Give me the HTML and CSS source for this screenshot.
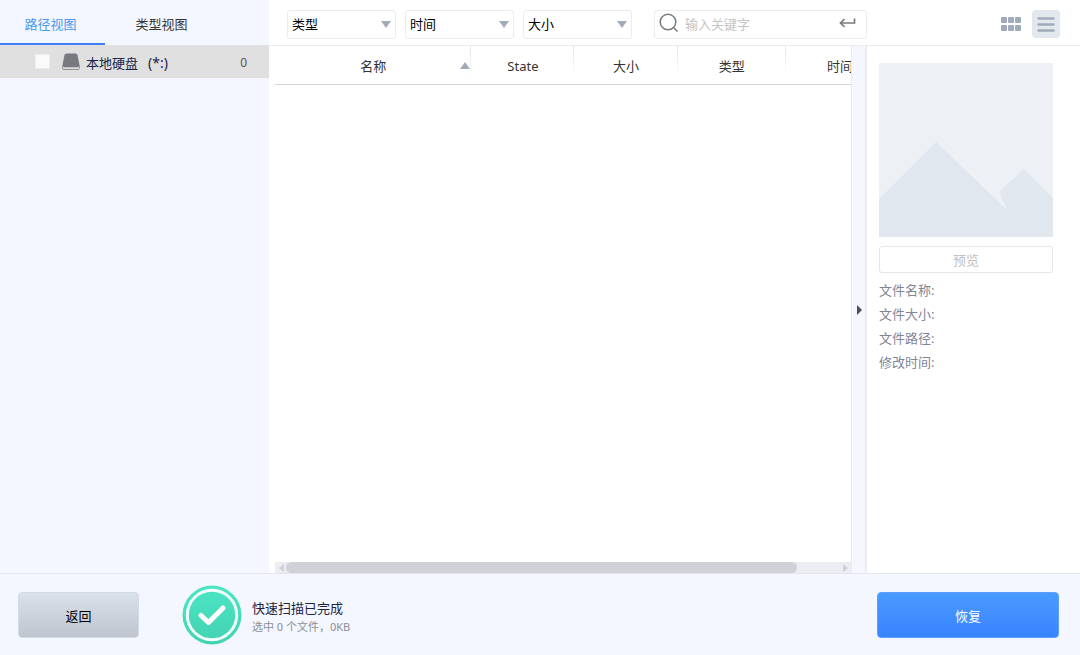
FILE: index.html
```html
<!DOCTYPE html>
<html lang="zh-CN">
<head>
<meta charset="utf-8">
<title>快速扫描</title>
<link rel="stylesheet" href="styles.css">
</head>
<body>
<div class="app">
  <div class="workspace">
    <aside class="sidebar">
      <nav class="tabs">
        <button type="button" class="tab tab-active">路径视图</button>
        <button type="button" class="tab">类型视图</button>
      </nav>
      <div class="tree-row">
        <input type="checkbox" class="tree-check" id="drive">
        <svg class="drive-icon" viewBox="0 0 18 18" width="18" height="18" aria-hidden="true">
          <path d="M4.500 0.500h9q1.700 0 2 1.500L17.700 13q.3 4-2 4H2.300q-2.300 0-2-4L2.500 2Q2.800 0.500 4.500 0.500z" fill="#77797e"/>
          <path d="M1 13.500q.5.800 1.500.8h13q1 0 1.500-.8v1.200q0 1.500-1.500 1.500h-13Q1 16.200 1 14.700z" fill="#dcdcde"/>
        </svg>
        <label for="drive" class="drive-name">本地硬盘<span class="drive-letter">(*:)</span></label>
        <span class="tree-count">0</span>
      </div>
    </aside>

    <main class="content">
      <header class="toolbar">
        <div class="filters">
          <div class="dropdown">
            <select aria-label="类型"><option>类型</option></select>
            <svg viewBox="0 0 10 7" width="10" height="7" aria-hidden="true"><path d="M0 0h10L5 7z"/></svg>
          </div>
          <div class="dropdown">
            <select aria-label="时间"><option>时间</option></select>
            <svg viewBox="0 0 10 7" width="10" height="7" aria-hidden="true"><path d="M0 0h10L5 7z"/></svg>
          </div>
          <div class="dropdown">
            <select aria-label="大小"><option>大小</option></select>
            <svg viewBox="0 0 10 7" width="10" height="7" aria-hidden="true"><path d="M0 0h10L5 7z"/></svg>
          </div>
        </div>
        <div class="search">
          <svg viewBox="0 0 20 20" width="20" height="20" fill="none" stroke="#777b80" stroke-width="1.500" aria-hidden="true">
            <circle cx="9" cy="9" r="7.800"/><path d="M14.500 14.500l4 4"/>
          </svg>
          <input type="text" aria-label="输入关键字" placeholder="输入关键字">
          <button type="button" class="enter" aria-label="搜索">
            <svg viewBox="0 0 17 12" width="17" height="12" fill="none" stroke="#777b80" stroke-width="1.700" aria-hidden="true">
              <path d="M15.500 1.500v4.500H1.500M5.500 2L1.500 6L5.500 10"/>
            </svg>
          </button>
        </div>
        <div class="views">
          <button type="button" class="view" aria-label="网格视图">
            <svg viewBox="0 0 20 14" width="20" height="14" fill="#a2abba" aria-hidden="true">
              <rect x="0" y="0" width="6" height="6" rx="1"/><rect x="7" y="0" width="6" height="6" rx="1"/><rect x="14" y="0" width="6" height="6" rx="1"/>
              <rect x="0" y="8" width="6" height="6" rx="1"/><rect x="7" y="8" width="6" height="6" rx="1"/><rect x="14" y="8" width="6" height="6" rx="1"/>
            </svg>
          </button>
          <button type="button" class="view view-active" aria-label="列表视图">
            <svg viewBox="0 0 18 16" width="18" height="16" fill="none" stroke="#a2abba" stroke-width="2.400" stroke-linecap="round" aria-hidden="true">
              <path d="M1.500 2.500h15M1.500 8.500h15M1.500 14.500h15"/>
            </svg>
          </button>
        </div>
      </header>

      <div class="panes">
        <section class="list-pane">
          <div class="table-view">
            <table class="files">
              <colgroup><col class="col-name"><col class="col-mid"><col class="col-mid"><col class="col-wide"><col class="col-wide"></colgroup>
              <thead>
                <tr>
                  <th>名称<svg class="sort" viewBox="0 0 10 7" width="10" height="7" aria-hidden="true"><path d="M0 7h10L5 0z"/></svg></th>
                  <th>State</th>
                  <th>大小</th>
                  <th>类型</th>
                  <th>时间</th>
                </tr>
              </thead>
            </table>
          </div>
          <div class="scrollbar" aria-hidden="true">
            <svg viewBox="0 0 5 8" width="5" height="8"><path d="M5 0v8L0 4z"/></svg>
            <div class="track"><div class="thumb"></div></div>
            <svg viewBox="0 0 5 8" width="5" height="8"><path d="M0 0v8l5-4z"/></svg>
          </div>
        </section>

        <button type="button" class="splitter" aria-label="收起预览">
          <svg viewBox="0 0 5 10" width="5" height="10" aria-hidden="true"><path d="M0 0v10l5-5z" fill="#4c4f55"/></svg>
        </button>

        <aside class="preview">
          <svg class="placeholder" viewBox="0 0 174 174" aria-hidden="true">
            <rect width="174" height="174" fill="#edf0f5"/>
            <path d="M0 136L57 79L128 147L120 129L145 106L174 135V174H0z" fill="#e1e7ef"/>
          </svg>
          <button type="button" class="preview-btn" disabled>预览</button>
          <ul class="details">
            <li>文件名称:</li>
            <li>文件大小:</li>
            <li>文件路径:</li>
            <li>修改时间:</li>
          </ul>
        </aside>
      </div>
    </main>
  </div>

  <footer class="footer">
    <button type="button" class="btn btn-back">返回</button>
    <svg class="done" viewBox="0 0 60 60" width="60" height="60" aria-hidden="true">
      <defs><linearGradient id="mint" x1="0" y1="0" x2="0" y2="1"><stop offset="0" stop-color="#4be6c5"/><stop offset="1" stop-color="#43d2b2"/></linearGradient></defs>
      <circle cx="30" cy="30" r="29.500" fill="url(#mint)"/>
      <circle cx="30" cy="30" r="24.700" fill="none" stroke="#f3fffc" stroke-width="3"/>
      <path d="M19 30.500L26.500 37.500L41 23" fill="none" stroke="#fff" stroke-width="5" stroke-linecap="round" stroke-linejoin="round"/>
    </svg>
    <div class="status">
      <p class="status-title">快速扫描已完成</p>
      <p class="status-sub">选中 0 个文件，0KB</p>
    </div>
    <button type="button" class="btn btn-recover">恢复</button>
  </footer>
</div>
</body>
</html>
```

FILE: styles.css
```css
* { box-sizing: border-box; }

body {
  margin: 0;
  font: 13px/20px "Noto Sans", "Noto Sans CJK SC", sans-serif;
  color: #333;
  background: #fff;
}

button, input, select {
  margin: 0;
  padding: 0;
  border: 0;
  background: none;
  font: inherit;
  color: inherit;
}

svg { display: block; flex: none; }

.app { display: flex; flex-direction: column; height: 100vh; }
.workspace { display: flex; flex: 1; min-height: 0; }

/* Sidebar */
.sidebar { width: 269px; flex: none; background: #f4f7ff; }
.tabs { display: flex; gap: 4px; height: 45px; }
.tab { width: 105px; padding: 4px 4px 0 0; border-bottom: 2px solid transparent; }
.tab + .tab { padding: 4px 0 0; }
.tab-active { color: #4a97ee; border-bottom-color: #3f7dfb; }

.tree-row {
  display: flex;
  align-items: center;
  height: 33px;
  padding: 0 22px 0 35px;
  background: #e0e0e0;
}
.tree-check {
  appearance: none;
  width: 15px;
  height: 15px;
  margin-right: 12px;
  background: #fafafa;
  border: 1px solid #ececec;
}
.drive-icon { margin-right: 6px; }
.drive-name { flex: 1; color: #1b2447; padding-top: 2px; }
.drive-letter { padding-left: 10px; font-size: 14px; }
.tree-count { padding-top: 2px; font-size: 12px; color: #555; }

/* Toolbar */
.content { display: flex; flex-direction: column; flex: 1; min-width: 0; }
.toolbar {
  display: flex;
  align-items: center;
  height: 46px;
  padding: 3px 20px 0 18px;
  border-bottom: 1px solid #ececee;
}
.filters { display: flex; gap: 9px; }
.dropdown {
  display: grid;
  grid-template-columns: 1fr 14px;
  align-items: center;
  width: 109px;
  height: 29px;
  border: 1px solid #ececee;
  border-radius: 3px;
}
.dropdown select {
  grid-area: 1 / 1 / 2 / 3;
  appearance: none;
  width: 100%;
  height: 27px;
  padding-left: 4px;
  color: #000;
}
.dropdown svg { grid-area: 1 / 2; pointer-events: none; fill: #a2abba; }
.search {
  display: flex;
  align-items: center;
  width: 213px;
  height: 29px;
  margin-left: 22px;
  padding: 0 10px 2px 4px;
  border: 1px solid #ececee;
  border-radius: 3px;
}
.search input { flex: 1; min-width: 0; height: 27px; padding: 2px 0 0 6px; outline: 0; }
.search input::placeholder { color: #c4c4c4; opacity: 1; }
.views { display: flex; gap: 7px; margin-left: auto; }
.view { display: grid; place-items: center; width: 28px; height: 28px; border-radius: 4px; }
.view-active { background: #e3e7ee; }

/* File list */
.panes { display: flex; flex: 1; min-height: 0; }
.list-pane { display: flex; flex-direction: column; flex: 1; min-width: 0; padding-left: 6px; }
.table-view { flex: 1; overflow: hidden; }
.files { table-layout: fixed; width: 619px; border-collapse: separate; border-spacing: 0; }
.col-name { width: 196px; }
.col-mid { width: 103px; }
.col-wide { width: 108px; }
.files th {
  position: relative;
  height: 39px;
  padding: 2px 0 0;
  font-weight: 400;
  border-bottom: 1px solid #d4d4d6;
  background: linear-gradient(#e2e4e8, #fff) right top / 1px 32px no-repeat;
}
.sort { position: absolute; right: 1px; top: 16px; fill: #a2abba; }
.scrollbar {
  display: flex;
  align-items: center;
  height: 11px;
  padding: 0 3px 0 4px;
  gap: 2px;
  background: #ebedf3;
}
.scrollbar svg { fill: #d0d1d6; }
.track { flex: 1; }
.thumb { width: 92%; height: 11px; border-radius: 6px; background: #d0d1d6; }

.splitter {
  display: grid;
  place-items: center;
  width: 16px;
  padding-left: 2px;
  border: solid #e8ebf5;
  border-width: 0 2px 0 1px;
  background: #f4f7ff;
}

/* Preview */
.preview { width: 213px; padding: 17px 27px 0 12px; }
.placeholder { width: 100%; height: auto; }
.preview-btn {
  width: 100%;
  height: 27px;
  margin-top: 9px;
  border: 1px solid #e6e6e8;
  border-radius: 3px;
  color: #c0c0c0;
}
.details { margin: 5px 0 0; padding: 0; list-style: none; line-height: 24px; color: #7f8696; }

/* Footer */
.footer {
  display: flex;
  align-items: center;
  height: 82px;
  padding: 1px 21px 0 18px;
  border-top: 1px solid #e3e6ec;
  background: #f4f7ff;
}
.btn { height: 46px; padding-top: 2px; border-radius: 4px; }
.btn-back {
  width: 121px;
  border: 1px solid #d3dae3;
  background: linear-gradient(#dae1ea, #bec5ce);
  color: #000;
}
.done { margin: 0 10px 0 43px; }
.status { flex: 1; padding-top: 4px; }
.status p { margin: 0; }
.status-title { color: #1b2447; }
.status-sub { font-size: 11px; line-height: 18px; color: #8a8f99; }
.btn-recover {
  width: 182px;
  border: 1px solid #5b9fff;
  background: linear-gradient(#4a9aff, #3884ff);
  color: #fff;
}
```
